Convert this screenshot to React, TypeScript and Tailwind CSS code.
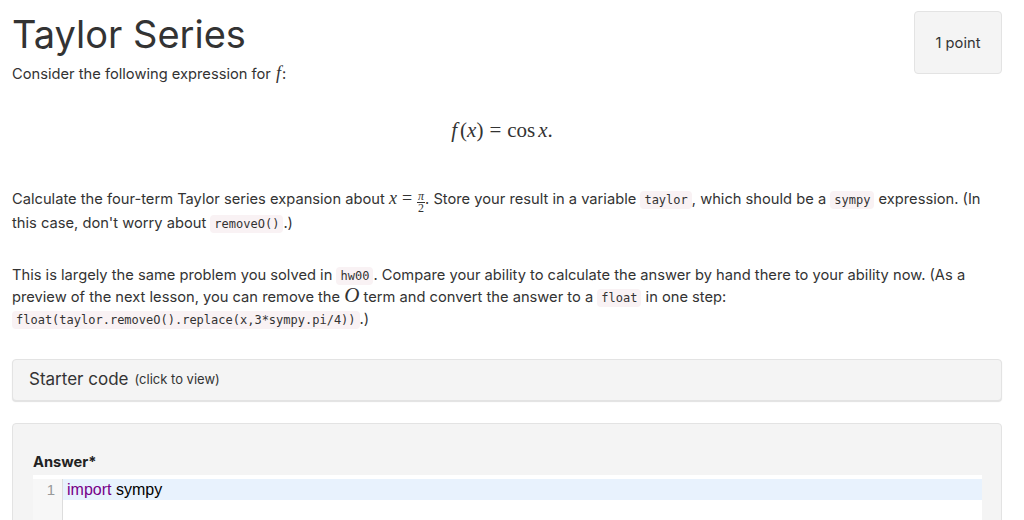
import React from "react";

const C = ({ children }: { children: React.ReactNode }) => (
  <code className="rounded-[4px] bg-[#f9f2f4] px-[4px] py-[2px] text-[12px] leading-[12px] text-[#333] [font-family:'DejaVu_Sans_Mono',monospace]">
    {children}
  </code>
);

const M = ({ children }: { children: React.ReactNode }) => (
  <span className="text-[18px] leading-[12px] [font-family:'Liberation_Serif',serif]">{children}</span>
);

export default function App() {
  return (
    <div className="min-h-[520px] bg-white px-[12px] text-[#333] [font-family:Inter,sans-serif]">
      <div className="flex w-[990px] items-start justify-between pt-[11px]">
        <h1 className="mt-[1px] text-[38px] leading-[44px] font-normal">Taylor Series</h1>
        <div className="flex h-[63px] w-[88px] items-center justify-center rounded-[4px] border border-[#e3e3e3] bg-[#f4f4f4] pt-[1px] text-[14.7px]">
          1 point
        </div>
      </div>
      <p className="-mt-[11px] text-[14.7px] leading-[22px]">
        Consider the following expression for <M><i className="mx-[1px]">f</i></M>:
      </p>
      <div className="mt-[31px] flex w-[990px] justify-center text-[21px] leading-[28px] [font-family:'Liberation_Serif',serif]">
        <span className="mr-[10px]">
          <i>f</i><span className="ml-[3px]">(</span><i>x</i>)<span className="mx-[6px]">=</span>cos<span className="ml-[3px]"><i>x</i></span>.
        </span>
      </div>
      <p className="mt-[43px] w-[990px] text-[14.7px] leading-[24px]">
        Calculate the four-term Taylor series expansion about <M><i>x</i><span className="mx-[5px]">=</span></M>
        <span className="inline-flex h-[14px] translate-y-[-2px] flex-col items-center align-middle text-[12px] leading-[11px] [font-family:'Liberation_Serif',serif]">
          <span className="border-b border-[#333] px-[1px] italic">π</span>
          <span>2</span>
        </span>
        . Store your result in a variable <C>taylor</C>, which should be a <C>sympy</C> expression. (In
        this case, don't worry about <C>removeO()</C>.)
      </p>
      <p className="mt-[29px] w-[990px] text-[14.7px] leading-[22px]">
        This is largely the same problem you solved in <C>hw00</C>. Compare your ability to calculate the
        answer by hand there to your ability now. (As a preview of the next lesson, you can remove the{" "}
        <span className="text-[21px] leading-[10px] italic [font-family:'Liberation_Serif',serif]">O</span> term and convert the answer to a <C>float</C> in one step:{" "}
        <C>float(taylor.removeO().replace(x,3*sympy.pi/4))</C>.)
      </p>
      <div className="mt-[29px] flex h-[42px] w-[990px] items-center rounded-[4px] border border-[#e3e3e3] bg-[#f4f4f4] px-[16px] shadow-[0_1px_1px_rgba(0,0,0,0.12)]">
        <span className="text-[17px]">Starter code</span>
        <span className="ml-[6px] text-[13px]">(click to view)</span>
      </div>
      <div className="mt-[22px] h-[120px] w-[990px] rounded-[4px] border border-[#e3e3e3] bg-[#f4f4f4] px-[20px] pt-[27px]">
        <div className="text-[14.7px] leading-[22px] font-bold text-[#222]">Answer*</div>
        <div className="mt-[2px] flex h-[60px] w-[949px] bg-white pt-[4px]">
          <div className="w-[30px] shrink-0 border-r border-[#ddd] bg-[#f7f7f7] pr-[7px] text-right text-[15px] leading-[21px] text-[#999] [font-family:'Liberation_Sans',sans-serif]">
            1
          </div>
          <div className="h-[21px] flex-1 bg-[#e8f2fd] pl-[4px] text-[16px] leading-[21px] text-black [font-family:'Liberation_Sans',sans-serif]">
            <span className="text-[#708]">import</span> sympy
          </div>
        </div>
      </div>
    </div>
  );
}
